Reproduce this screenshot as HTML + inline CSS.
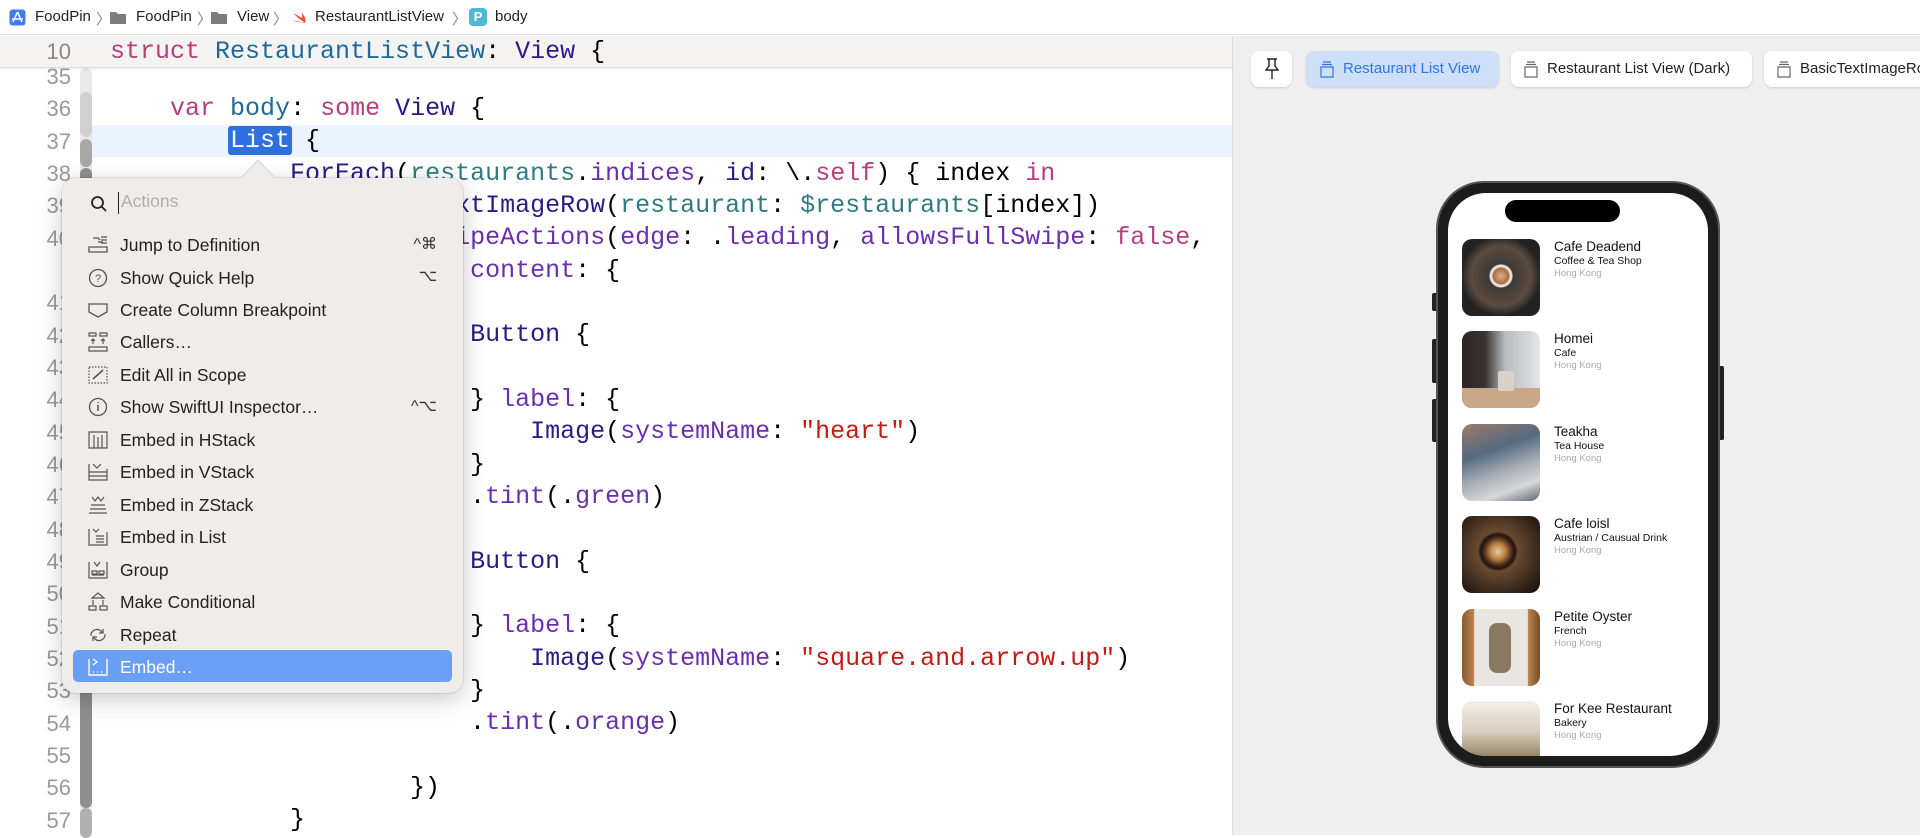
<!DOCTYPE html>
<html><head><meta charset="utf-8"><style>
*{margin:0;padding:0;box-sizing:border-box}
body{width:1920px;height:835px;overflow:hidden;background:#fff;font-family:"Liberation Sans",sans-serif;position:relative}
.crumb{position:absolute;left:0;top:0;width:1920px;height:35px;background:#fff;border-bottom:1px solid #e4e4e4;font-size:15px;color:#222}
.crumb span{position:absolute;top:8px}
.hdr{position:absolute;left:0;top:36px;width:1232px;height:32px;background:#f4f3f1;border-bottom:1px solid #dcdcdc;box-shadow:0 2px 3px rgba(0,0,0,.06);z-index:2}
.mono{font-family:"Liberation Mono",monospace;font-size:25px;white-space:pre;position:absolute;line-height:32px}
.ln{position:absolute;left:0;width:71px;text-align:right;font-size:22px;color:#9a9a9a;line-height:32px;font-family:"Liberation Sans",sans-serif}
.k{color:#b83d7b}.t{color:#2c1a85}.v{color:#1d6a9a}.p{color:#6a2fae}.r{color:#2f7a80}.s{color:#c41a16}
.right{position:absolute;left:1232px;top:36px;width:688px;height:799px;background:#efefef;border-left:1px solid #dedede}
.btn{position:absolute;top:15px;height:36px;background:#fff;border-radius:8px;box-shadow:0 1px 2px rgba(0,0,0,.15);font-size:15px;line-height:36px;color:#222;white-space:nowrap;overflow:hidden}
.pop{position:absolute;left:62px;top:178px;width:401px;height:515px;background:#efedea;border-radius:14px;box-shadow:0 6px 24px rgba(0,0,0,.22),0 0 0 1px rgba(0,0,0,.08);z-index:5}
.it{position:absolute;left:58px;font-size:17.5px;color:#222;line-height:24px}
.ic{position:absolute;left:25px;width:22px;height:22px}
.sc{position:absolute;right:26px;font-size:16px;color:#333}
.row{position:absolute;left:1462px}
.img{position:absolute;left:0;width:78px;height:77px;border-radius:10px}
.tx{position:absolute;left:92px;white-space:nowrap}
.tx b{display:block;font-weight:normal;font-size:13.5px;color:#111}
.tx i{display:block;font-style:normal;font-size:10.5px;color:#111;margin-top:1px}
.tx u{display:block;text-decoration:none;font-size:9.5px;color:#aaa;margin-top:1px}
</style></head><body>
<div class="crumb">
<svg style="position:absolute;left:9px;top:9px" width="17" height="17"><rect x="0.5" y="0.5" width="16" height="16" rx="3" fill="#3f7ee8"/><path d="M8.5 3 L4 13 M8.5 3 L13 13 M3 10 H14" stroke="#fff" stroke-width="1.5" fill="none"/></svg>
<span style="left:35px">FoodPin</span><span style="left:96px;color:#888">〉</span>
<svg style="position:absolute;left:110px;top:11px" width="16" height="13"><path d="M0 1h6l2 2h8v10H0z" fill="#7c7c7c"/></svg>
<span style="left:136px">FoodPin</span><span style="left:197px;color:#888">〉</span>
<svg style="position:absolute;left:211px;top:11px" width="16" height="13"><path d="M0 1h6l2 2h8v10H0z" fill="#7c7c7c"/></svg>
<span style="left:237px">View</span><span style="left:273px;color:#888">〉</span>
<svg style="position:absolute;left:291px;top:10px" width="16" height="15"><path d="M2 3 Q9 10 13 12 Q7 13 2 10 Q9 12 14 13 Q16 8 10 2 Q12 6 11 8 Q6 5 2 3z" fill="#f05138"/></svg>
<span style="left:315px">RestaurantListView</span><span style="left:452px;color:#888">〉</span>
<div style="position:absolute;left:469px;top:8px;width:18px;height:18px;border-radius:4px;background:#4fb8d6;color:#fff;font-size:13px;text-align:center;line-height:18px;font-weight:bold">P</div>
<span style="left:495px">body</span>
</div>
<div class="hdr">
<div class="ln" style="top:0;font-size:22px;color:#888">10</div>
<div class="mono" style="left:110px;top:0"><span class="k">struct</span> <span class="v">RestaurantListView</span>: <span class="t">View</span> {</div>
</div>
<!-- gutter -->
<div style="position:absolute;left:80px;top:68px;width:12px;height:767px;background:#e9e9e9;border-radius:6px"></div>
<div style="position:absolute;left:80px;top:92px;width:12px;height:45px;background:#d0d0d0;border-radius:6px"></div>
<div style="position:absolute;left:80px;top:139px;width:12px;height:28px;background:#a8a8a8;border-radius:6px"></div>
<div style="position:absolute;left:80px;top:168px;width:12px;height:640px;background:#8e8e8e;border-radius:6px"></div>
<div style="position:absolute;left:80px;top:808px;width:12px;height:30px;background:#b0b0b0;border-radius:6px"></div>
<div style="position:absolute;left:92px;top:125px;width:1140px;height:32px;background:#ebf3fe"></div>
<div class="ln" style="top:61px">35</div><div class="ln" style="top:93px">36</div><div class="ln" style="top:126px">37</div><div class="ln" style="top:158px">38</div><div class="ln" style="top:190px">39</div><div class="ln" style="top:223px">40</div><div class="ln" style="top:287px">41</div><div class="ln" style="top:320px">42</div><div class="ln" style="top:352px">43</div><div class="ln" style="top:384px">44</div><div class="ln" style="top:417px">45</div><div class="ln" style="top:449px">46</div><div class="ln" style="top:481px">47</div><div class="ln" style="top:514px">48</div><div class="ln" style="top:546px">49</div><div class="ln" style="top:578px">50</div><div class="ln" style="top:611px">51</div><div class="ln" style="top:643px">52</div><div class="ln" style="top:675px">53</div><div class="ln" style="top:708px">54</div><div class="ln" style="top:740px">55</div><div class="ln" style="top:772px">56</div><div class="ln" style="top:805px">57</div>
<div class="mono" style="left:110px;top:93px;line-height:32.33px">    <span class="k">var</span> <span class="v">body</span>: <span class="k">some</span> <span class="t">View</span> {
        <span style="background:#2f6fe0;color:#fff;border-radius:3px;padding:0 2px;margin:0 -2px">List</span> {
            <span class="t">ForEach</span>(<span class="r">restaurants</span>.<span class="p">indices</span>, <span class="t">id</span>: \.<span class="k">self</span>) { index <span class="k">in</span>
                <span class="t">BasicTextImageRow</span>(<span class="r">restaurant</span>: <span class="r">$restaurants</span>[index])
                    .<span class="p">swipeActions</span>(<span class="p">edge</span>: .<span class="p">leading</span>, <span class="p">allowsFullSwipe</span>: <span class="k">false</span>,
                        <span class="p">content</span>: {

                        <span class="t">Button</span> {

                        } <span class="p">label</span>: {
                            <span class="t">Image</span>(<span class="p">systemName</span>: <span class="s">"heart"</span>)
                        }
                        .<span class="p">tint</span>(.<span class="p">green</span>)

                        <span class="t">Button</span> {

                        } <span class="p">label</span>: {
                            <span class="t">Image</span>(<span class="p">systemName</span>: <span class="s">"square.and.arrow.up"</span>)
                        }
                        .<span class="p">tint</span>(.<span class="p">orange</span>)

                    })
            }</div>
<!-- popup -->
<svg style="position:absolute;left:240px;top:158px;z-index:6" width="36" height="22"><path d="M0 21 L18 2 L36 21" fill="#efedea" stroke="#d6d4d0" stroke-width="1"/><rect x="0" y="20" width="36" height="3" fill="#efedea"/></svg>
<div class="pop">
<svg style="position:absolute;left:28px;top:17px" width="18" height="18"><circle cx="7.5" cy="7.5" r="5.5" stroke="#222" stroke-width="1.8" fill="none"/><path d="M11.5 11.5 L16 16" stroke="#222" stroke-width="1.8"/></svg>
<div style="position:absolute;left:56px;top:14px;width:1px;height:22px;background:#222"></div>
<div style="position:absolute;left:59px;top:13px;font-size:17.5px;color:#b0aeaa">Actions</div>
<svg class="ic" style="top:56px" viewBox="0 0 22 22"><path d="M6 4h5l2 2M11 8h5M14 3h6M14 6h6M14 9h6M2 13h18v5H2z" stroke="#555" stroke-width="1.3" fill="none"/></svg><div class="it" style="top:55px">Jump to Definition</div><div class="sc" style="top:56px">^⌘</div>
<svg class="ic" style="top:89px" viewBox="0 0 22 22"><circle cx="11" cy="11" r="8.5" stroke="#555" stroke-width="1.3" fill="none"/><text x="11" y="15" font-size="11" text-anchor="middle" fill="#555" font-family="Liberation Sans">?</text></svg><div class="it" style="top:88px">Show Quick Help</div><div class="sc" style="top:88px">⌥</div>
<svg class="ic" style="top:121px" viewBox="0 0 22 22"><path d="M2 5h18v8l-9 5-9-5z" stroke="#555" stroke-width="1.3" fill="none"/></svg><div class="it" style="top:120px">Create Column Breakpoint</div>
<svg class="ic" style="top:153px" viewBox="0 0 22 22"><path d="M2 2h7v3H2zM13 2h7v3h-7zM2 16h18v4H2zM6 13V8M4 10l2-2 2 2M16 13V8M14 10l2-2 2 2" stroke="#555" stroke-width="1.2" fill="none"/></svg><div class="it" style="top:152px">Callers…</div>
<svg class="ic" style="top:186px" viewBox="0 0 22 22"><rect x="2" y="3" width="18" height="16" stroke="#555" stroke-width="1.2" stroke-dasharray="1.5 1.5" fill="none"/><path d="M6 15L16 6" stroke="#555" stroke-width="1.6"/></svg><div class="it" style="top:185px">Edit All in Scope</div>
<svg class="ic" style="top:218px" viewBox="0 0 22 22"><circle cx="11" cy="11" r="8.5" stroke="#555" stroke-width="1.3" fill="none"/><path d="M11 9v6M11 6v1" stroke="#555" stroke-width="1.5"/></svg><div class="it" style="top:217px">Show SwiftUI Inspector…</div><div class="sc" style="top:218px">^⌥</div>
<svg class="ic" style="top:251px" viewBox="0 0 22 22"><path d="M2 3h18v16H2zM7 6v13M15 6v13M11 8v11" stroke="#555" stroke-width="1.2" fill="none"/></svg><div class="it" style="top:250px">Embed in HStack</div>
<svg class="ic" style="top:283px" viewBox="0 0 22 22"><path d="M2 3v16h18V8M2 11h18M2 15h18M6 3l4 4 4-4" stroke="#555" stroke-width="1.2" fill="none"/></svg><div class="it" style="top:282px">Embed in VStack</div>
<svg class="ic" style="top:316px" viewBox="0 0 22 22"><path d="M2 19h18M3 15h16M4 11h14M5 3l3 4 3-4 3 4 3-4" stroke="#555" stroke-width="1.2" fill="none"/></svg><div class="it" style="top:315px">Embed in ZStack</div>
<svg class="ic" style="top:348px" viewBox="0 0 22 22"><path d="M2 3v16h18V6M9 10h8M9 13h8M9 16h8M6 3l3 3 3-3" stroke="#555" stroke-width="1.2" fill="none"/></svg><div class="it" style="top:347px">Embed in List</div>
<svg class="ic" style="top:381px" viewBox="0 0 22 22"><path d="M2 3v16h18V3M5 12h5v3H5zM12 12h5v3h-5zM5 16h12M7 3l3 4 3-4" stroke="#555" stroke-width="1.2" fill="none"/></svg><div class="it" style="top:380px">Group</div>
<svg class="ic" style="top:413px" viewBox="0 0 22 22"><path d="M11 2l-6 5h12zM2 15h7v4H2zM13 15h7v4h-7zM6 9v5M16 9v5" stroke="#555" stroke-width="1.2" fill="none"/></svg><div class="it" style="top:412px">Make Conditional</div>
<svg class="ic" style="top:446px" viewBox="0 0 22 22"><path d="M4 12a6 6 0 0 1 10-5l2 2M18 10a6 6 0 0 1-10 5l-2-2M16 5v4h-4M6 17v-4h4" stroke="#555" stroke-width="1.2" fill="none"/></svg><div class="it" style="top:445px">Repeat</div>
<div style="position:absolute;left:11px;top:472px;width:379px;height:32px;background:#6a9ff5;border-radius:5px"></div>
<svg class="ic" style="top:478px" viewBox="0 0 22 22"><path d="M2 3v16h18V3M6 3l4 3-4 3M6 16h1M10 16h1M14 16h1" stroke="#fff" stroke-width="1.4" fill="none"/></svg><div class="it" style="top:477px;color:#fff">Embed…</div>
</div>
<!-- right panel -->
<div class="right">
<div class="btn" style="left:18px;width:41px;text-align:center"><svg width="18" height="24" style="margin-top:6px"><path d="M4 2h10M6 2v7l-3 4h12l-3-4V2M9 13v9" stroke="#222" stroke-width="1.4" fill="none"/></svg></div>
<div class="btn" style="left:73px;width:193px;background:#cddff9;color:#2f74e9;padding-left:37px"><svg style="position:absolute;left:14px;top:10px" width="14" height="17"><path d="M3 1h8M2 3.5h10M1 6h12v10H1z" stroke="#2f74e9" stroke-width="1.2" fill="none"/></svg>Restaurant List View</div>
<div class="btn" style="left:278px;width:241px;padding-left:36px"><svg style="position:absolute;left:13px;top:10px" width="14" height="17"><path d="M3 1h8M2 3.5h10M1 6h12v10H1z" stroke="#666" stroke-width="1.2" fill="none"/></svg>Restaurant List View (Dark)</div>
<div class="btn" style="left:531px;width:200px;padding-left:36px"><svg style="position:absolute;left:13px;top:10px" width="14" height="17"><path d="M3 1h8M2 3.5h10M1 6h12v10H1z" stroke="#666" stroke-width="1.2" fill="none"/></svg>BasicTextImageRow</div>
</div>
<!-- phone -->
<div style="position:absolute;left:1432px;top:293px;width:6px;height:18px;background:#222;border-radius:2px"></div>
<div style="position:absolute;left:1432px;top:339px;width:6px;height:44px;background:#222;border-radius:2px"></div>
<div style="position:absolute;left:1432px;top:399px;width:6px;height:43px;background:#222;border-radius:2px"></div>
<div style="position:absolute;left:1718px;top:366px;width:6px;height:74px;background:#222;border-radius:2px"></div>
<div style="position:absolute;left:1436px;top:181px;width:284px;height:587px;background:#1c1c1c;border-radius:48px;border:2px solid #555"></div>
<div style="position:absolute;left:1448px;top:193px;width:260px;height:563px;background:#fff;border-radius:38px;overflow:hidden">
<div style="position:absolute;left:57px;top:7px;width:115px;height:22px;background:#000;border-radius:11px"></div>
</div>
<div style="position:absolute;left:1448px;top:193px;width:260px;height:563px;border-radius:38px;overflow:hidden">
<div class="row" style="left:14px;top:46px"><div class="img" style="background:radial-gradient(circle at 50% 48%,#d8b08a 0,#a86c3e 8px,#e8e0d8 9px,#e8e0d8 11px,#3d3a38 12px,#5b4a3e 30px,#222 40px)"></div><div class="tx"><b>Cafe Deadend</b><i>Coffee &amp; Tea Shop</i><u>Hong Kong</u></div></div>
<div class="row" style="left:14px;top:138px"><div class="img" style="background:linear-gradient(90deg,#2a2624 0,#3a3330 30%,#b7bcc0 55%,#e4e6e8 100%)"><div style="position:absolute;left:0;bottom:0;width:78px;height:20px;background:#c8a886;border-radius:0 0 10px 10px"></div><div style="position:absolute;left:36px;top:40px;width:16px;height:20px;background:#d8d2c8;border-radius:2px"></div></div><div class="tx"><b>Homei</b><i>Cafe</i><u>Hong Kong</u></div></div>
<div class="row" style="left:14px;top:231px"><div class="img" style="background:linear-gradient(160deg,#9d7a68 0,#556a80 35%,#a8aeb6 60%,#d6d8da 80%,#5f6670 100%)"></div><div class="tx"><b>Teakha</b><i>Tea House</i><u>Hong Kong</u></div></div>
<div class="row" style="left:14px;top:323px"><div class="img" style="background:radial-gradient(circle at 46% 46%,#e6cba6 0,#b97e44 8px,#4a2a1a 14px,#1f1410 17px,#6a4a30 20px,#3b2a1e 40px,#1c1410 55px)"></div><div class="tx"><b>Cafe loisl</b><i>Austrian / Causual Drink</i><u>Hong Kong</u></div></div>
<div class="row" style="left:14px;top:416px"><div class="img" style="background:linear-gradient(90deg,#8a5a2c 0,#b88550 15%,#e9e6e2 16%,#e9e6e2 84%,#b88550 85%,#7a4a22 100%)"><div style="position:absolute;left:27px;top:14px;width:22px;height:50px;background:#8a7a62;border-radius:8px"></div></div><div class="tx"><b>Petite Oyster</b><i>French</i><u>Hong Kong</u></div></div>
<div class="row" style="left:14px;top:508px"><div class="img" style="background:linear-gradient(180deg,#f4efe8 0,#d8cdbf 40%,#9a8a6a 70%,#6a7a4a 100%)"></div><div class="tx"><b>For Kee Restaurant</b><i>Bakery</i><u>Hong Kong</u></div></div>
</div>
</body></html>
